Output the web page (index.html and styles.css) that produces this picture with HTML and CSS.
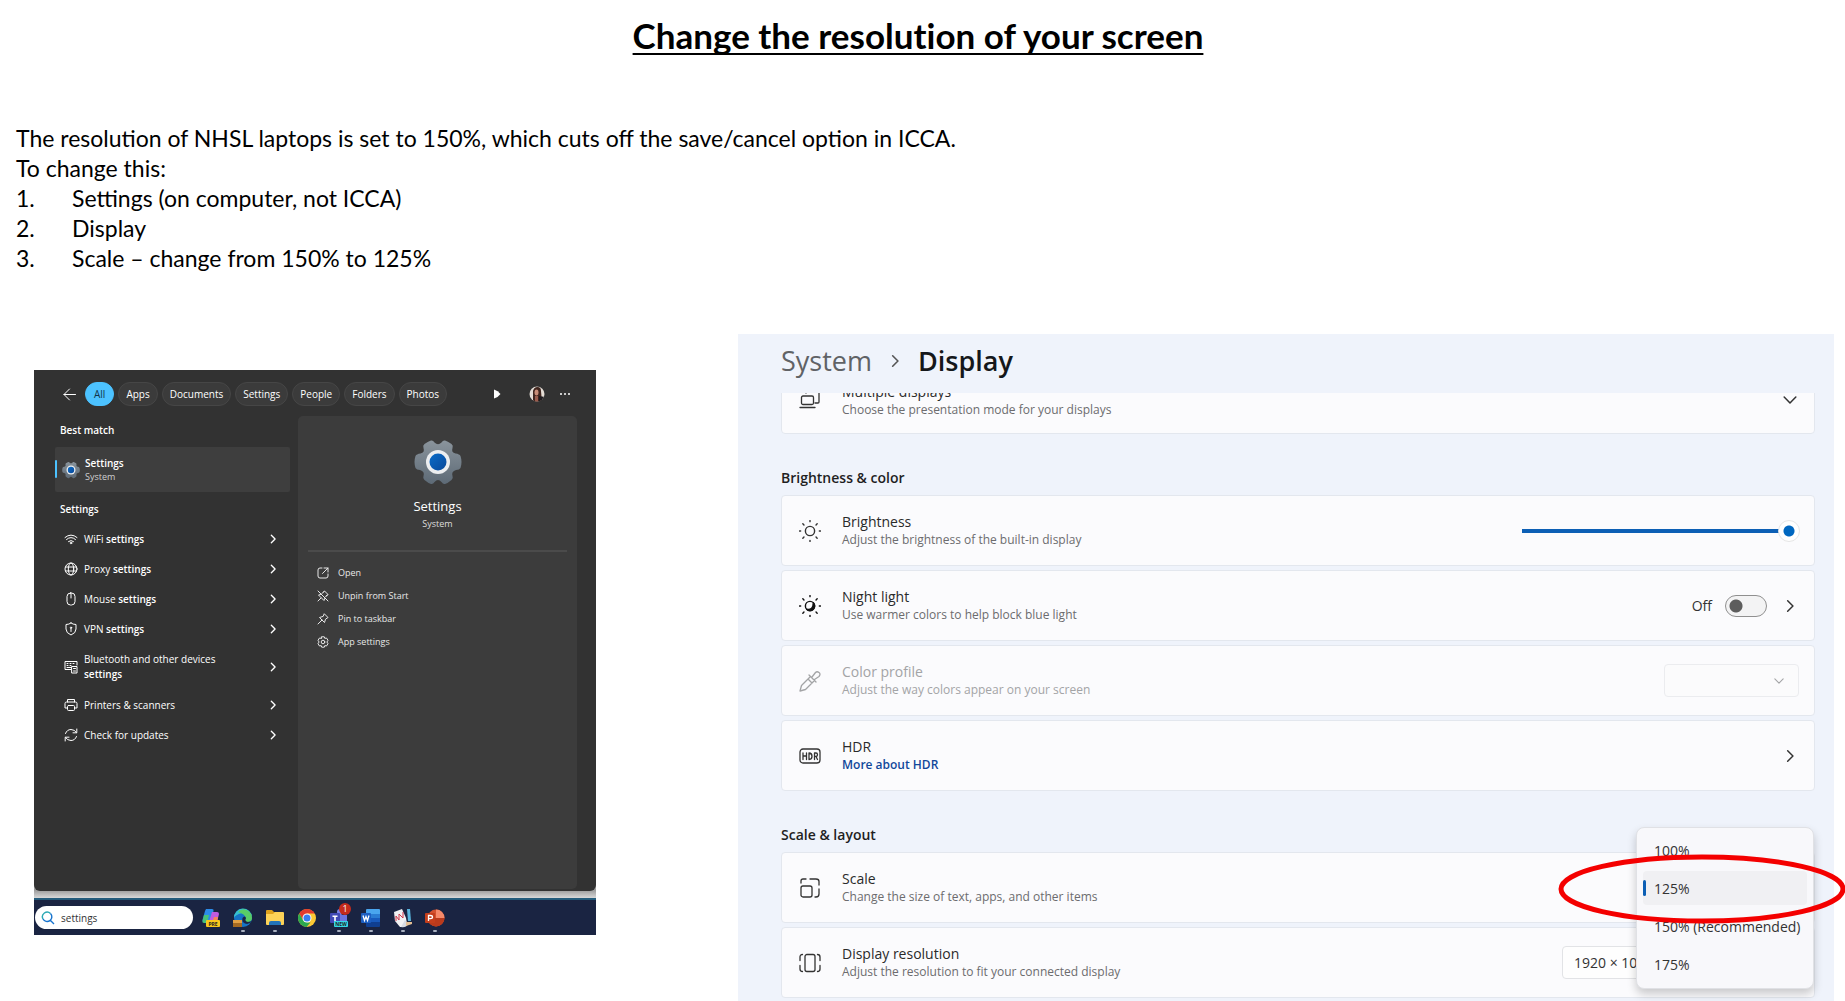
FILE: index.html
```html
<!DOCTYPE html>
<html lang="en">
<head>
<meta charset="utf-8">
<meta name="viewport" content="width=device-width, initial-scale=1">
<title>Change the resolution of your screen</title>
<link rel="stylesheet" href="styles.css">
</head>
<body>
<svg class="sprite" aria-hidden="true">
  <defs>
    <linearGradient id="gearGrad" x1="0" y1="0" x2="0" y2="1"><stop offset="0" stop-color="#8a949c"/><stop offset="1" stop-color="#5d6a76"/></linearGradient>
    <linearGradient id="hubGrad" x1="0" y1="0" x2="1" y2="1"><stop offset="0" stop-color="#0a6cc8"/><stop offset="1" stop-color="#08489a"/></linearGradient>
  </defs>
  <symbol id="gear" viewBox="0 0 48 48">
    <path fill="url(#gearGrad)" d="M17 2.5Q14.500 3 10.500 6Q8.500 7.500 9.500 10Q11 14.500 6.500 15.500Q2.500 16 1.500 18Q0.500 21 .5 24Q.5 27 1.500 30Q2.500 32 6 32Q11 33.500 9.500 38Q8.500 40.500 10.500 42Q14 45 17 46Q19 46.500 20.500 44Q24 40 27.500 44Q29 46.500 31 46Q34 45 37.500 42Q39.500 40.500 38.500 38Q37 33.500 42 32Q45.500 32 46.500 30Q47.500 27 47.500 24Q47.500 21 46.500 18Q45.500 16 41.500 15.500Q37 14.500 38.500 10Q39.500 7.500 37.500 6Q33.500 3 31 2.500Q29 2 27.500 4.500Q24 8 20.500 4.500Q19 2 17 2.500Z"/>
    <circle cx="24" cy="24" r="12" fill="#eceef0"/><circle cx="24" cy="24" r="8.500" fill="url(#hubGrad)"/>
  </symbol>
  <symbol id="chev" viewBox="0 0 12 12"><path d="M4 1.500 8.500 6 4 10.500"/></symbol>
  <symbol id="chevdown" viewBox="0 0 12 12"><path d="M1 3.500 6 8.500 11 3.500"/></symbol>
  <symbol id="rays" viewBox="0 0 20 20"><path d="M10 .5v1M10 18.500v1M.5 10h1M18.500 10h1M3.500 3.500l1 1M15.500 15.500l1 1M3.500 16.500l1-1M15.500 4.500l1-1"/></symbol>
</svg>

<header class="title"><h1>Change the resolution of your screen</h1></header>

<section class="intro">
  <p>The resolution of NHSL laptops is set to 150%, which cuts off the save/cancel option in ICCA.</p>
  <p>To change this:</p>
  <ol>
    <li>Settings (on computer, not ICCA)</li>
    <li>Display</li>
    <li>Scale – change from 150% to 125%</li>
  </ol>
</section>

<main class="shots">
  <section class="desktop" aria-label="Start search">
    <div class="search-panel">
      <div class="filters">
        <button class="plain" aria-label="Back"><svg class="line" width="13" height="13" viewBox="0 0 13 13"><path d="M12.500 6.500H1M6.500 1 1 6.500l5.500 5.500"/></svg></button>
        <button class="pill on">All</button>
        <button class="pill">Apps</button>
        <button class="pill">Documents</button>
        <button class="pill">Settings</button>
        <button class="pill">People</button>
        <button class="pill">Folders</button>
        <button class="pill">Photos</button>
        <span class="filter-end">
          <button class="plain" aria-label="Next filters"><svg width="8" height="10" viewBox="0 0 8 10"><path fill="#fff" d="M1 .5q4 1 6.500 4.500Q5 8.500 1 9.500z"/></svg></button>
          <button class="plain" aria-label="Account"><svg width="16" height="16" viewBox="0 0 16 16"><clipPath id="face"><circle cx="8" cy="8" r="7.500"/></clipPath><g clip-path="url(#face)"><rect width="16" height="16" fill="#e4ddd6"/><path fill="#40261f" d="M4 16V5q1-4 4.500-4T12 5l1 11z"/><ellipse cx="7.500" cy="6.500" rx="2" ry="3" fill="#c98e78"/><path fill="#9b5c4d" d="M6 10h3v6H6z"/><path fill="#1f1c20" d="M10 10l6 1v5h-6z"/></g></svg></button>
          <button class="plain" aria-label="More"><svg width="12" height="4" viewBox="0 0 12 4" fill="#fff"><circle cx="2" cy="2" r="1"/><circle cx="6" cy="2" r="1"/><circle cx="10" cy="2" r="1"/></svg></button>
        </span>
      </div>

      <div class="results">
        <div class="matches">
          <h2>Best match</h2>
          <button class="best">
            <svg width="18" height="18"><use href="#gear"/></svg>
            <span><b>Settings</b><small>System</small></span>
          </button>
          <h2 class="second">Settings</h2>
          <ul>
            <li><button class="row"><svg class="line" width="14" height="14" viewBox="0 0 14 14"><path d="M1 5.500q6-5 12 0M2.500 7.500q4.500-4 9 0M4.500 9.500q2.500-2 5 0"/><circle cx="7" cy="11" r=".8"/></svg><span>WiFi <b>settings</b></span><svg class="line go" width="10" height="10"><use href="#chev"/></svg></button></li>
            <li><button class="row"><svg class="line" width="14" height="14" viewBox="0 0 14 14"><circle cx="7" cy="7" r="6"/><ellipse cx="7" cy="7" rx="2.700" ry="6"/><path d="M1.500 5h11M1.500 9h11"/></svg><span>Proxy <b>settings</b></span><svg class="line go" width="10" height="10"><use href="#chev"/></svg></button></li>
            <li><button class="row"><svg class="line" width="14" height="14" viewBox="0 0 14 14"><rect x="3" y="1" width="8" height="12" rx="3.500"/><path d="M7 1v5"/></svg><span>Mouse <b>settings</b></span><svg class="line go" width="10" height="10"><use href="#chev"/></svg></button></li>
            <li><button class="row"><svg class="line" width="14" height="14" viewBox="0 0 14 14"><path d="M7 1q2 1.500 5 1.500V7q0 4-5 6-5-2-5-6V2.500Q5 2.500 7 1zM7 6.500v3"/><circle cx="7" cy="5.700" r=".7"/></svg><span>VPN <b>settings</b></span><svg class="line go" width="10" height="10"><use href="#chev"/></svg></button></li>
            <li><button class="row tall"><svg class="line" width="14" height="14" viewBox="0 0 14 14"><path d="M7 9.500H1v-8h12V5M3 3.500h1M6 3.500h1M9 3.500h1M3 5.500h1M6 5.500h1M3 7.500h4"/><rect x="8" y="6.500" width="5" height="6.500"/><path d="M9.500 8.500h2M9.500 11h2"/></svg><span>Bluetooth and other devices <b>settings</b></span><svg class="line go" width="10" height="10"><use href="#chev"/></svg></button></li>
            <li><button class="row"><svg class="line" width="14" height="14" viewBox="0 0 14 14"><path d="M3.500 4V1.500h7V4M3.500 10H1V5.500Q1 4 2.500 4h9Q13 4 13 5.500V10h-2.500"/><rect x="3.500" y="7.500" width="7" height="5" rx="1"/></svg><span>Printers &amp; scanners</span><svg class="line go" width="10" height="10"><use href="#chev"/></svg></button></li>
            <li><button class="row"><svg class="line" width="14" height="14" viewBox="0 0 14 14"><path d="M1.500 5.500Q3 1.500 7 1.500q3.500 0 5.500 3M12.800 1v3.800H9M12.500 8.500Q11 12.500 7 12.500q-3.500 0-5.500-3M1.200 13V9.200H5"/></svg><span>Check for updates</span><svg class="line go" width="10" height="10"><use href="#chev"/></svg></button></li>
          </ul>
        </div>

        <div class="preview">
          <svg class="big-gear" width="48" height="48"><use href="#gear"/></svg>
          <h3>Settings</h3>
          <p>System</p>
          <hr>
          <ul>
            <li><button class="act"><svg class="line" width="12" height="12" viewBox="0 0 12 12"><path d="M5 1H3Q1 1 1 3v6q0 2 2 2h6q2 0 2-2V7M7 1h4v4M11 1 5.500 6.500"/></svg>Open</button></li>
            <li><button class="act"><svg class="line" width="12" height="12" viewBox="0 0 12 12"><path d="M1 1l10 10M6 2.500 7.500 1 11 4.500 9 6M3.500 4.500l-2 .5L7 10.500l.7-2M1 11l3-3M5 3.500l2-2M8.500 7l2-2"/></svg>Unpin from Start</button></li>
            <li><button class="act"><svg class="line" width="12" height="12" viewBox="0 0 12 12"><path d="M7.500 1 11 4.500 8.500 6.200 7.500 9.500l-5-5 3.300-1zM5 7l-4 4"/></svg>Pin to taskbar</button></li>
            <li><button class="act"><svg class="line" width="12" height="12" viewBox="0 0 12 12"><path d="M4.700.8h2.600l.5 1.600 1.700-.4 1.500 2.300L9.900 6l1.100 1.700L9.500 10l-1.700-.4-.5 1.600H4.700l-.5-1.600-1.700.4L1 7.700 2.100 6 1 4.300 2.500 2l1.700.4z"/><circle cx="6" cy="6" r="1.800"/></svg>App settings</button></li>
          </ul>
        </div>
      </div>
    </div>

    <div class="taskbar">
      <label class="search"><svg width="14" height="14" viewBox="0 0 14 14" fill="none"><path stroke="#2ba9b4" stroke-width="1.400" d="M2 8A4.700 4.700 0 0 1 9.500 2.500"/><path stroke="#1774cf" stroke-width="1.400" d="M9.500 2.500A4.700 4.700 0 1 1 2 8M9.500 9.500 13 13"/></svg><input type="text" value="settings" aria-label="Search"></label>
      <button class="app" aria-label="Copilot"><svg width="20" height="20" viewBox="0 0 20 20"><path fill="#2b8be8" d="M5 1h6q2 0 1.500 2L9 14H3q-2 0-1.500-2L4 3z"/><path fill="#47c27a" d="M3 7h5l-2 8H3q-2 0-1.500-2z"/><path fill="#c05be0" d="M11 4h5q2 0 2 2l-2 8H8z"/><path fill="#f7855a" d="M13 9h4l-1 6h-5z"/><rect x="5" y="12" width="14" height="7" rx="1" fill="#fbc71c"/><text x="12" y="18" text-anchor="middle" class="tag">PRE</text></svg></button>
      <button class="app open" aria-label="Edge"><svg width="20" height="20" viewBox="0 0 20 20"><circle cx="10" cy="10" r="9" fill="#1673c4"/><path fill="#36bfd0" d="M1 10A9 9 0 0 1 19 9Q17 3 9 5 2 7 1 10z"/><path fill="#59cd66" d="M11 1.200A9 9 0 0 1 19 10q0 4-5 4-3-1-1-4-1-4-8-6 3-3 6-2.800z"/><path fill="#1b2543" d="M9.500 10q2-3 3.500 0-2 3 2 4l3.500-.8Q16 17 12 15.500 8.500 14 9.500 10z"/><path fill="#a56a22" d="M0 12h9v7H0z"/><path fill="#e1a044" d="M0 12h9v3H0z"/></svg></button>
      <button class="app open" aria-label="File Explorer"><svg width="20" height="20" viewBox="0 0 20 20"><path fill="#dfa21d" d="M1 3q0-1 1-1h5l2 2h9v4H1z"/><path fill="#fdd257" d="M1 6h7l2-2h8q1 0 1 1v11q0 1-1 1H2q-1 0-1-1z"/><path fill="#2273b8" d="M4 17v-2q0-2 2-2h8q2 0 2 2v2z"/></svg></button>
      <button class="app" aria-label="Chrome"><svg width="20" height="20" viewBox="0 0 20 20"><circle cx="10" cy="10" r="9" fill="#fcc934"/><path fill="#e33b2e" d="M2.200 5.500A9 9 0 0 1 17.800 5.500H10L6 12.300z"/><path fill="#2da94f" d="M2.200 5.500 6.100 12.300Q8 15 10.500 14.500L9.500 19A9 9 0 0 1 2.200 5.500z"/><path fill="#2da94f" d="M6.100 12.300 10 14.500h3.500L9.500 19z"/><circle cx="10" cy="10" r="4.500" fill="#fff"/><circle cx="10" cy="10" r="3.500" fill="#3a7df0"/></svg></button>
      <button class="app open" aria-label="Teams, 1 notification"><svg width="20" height="20" viewBox="0 0 20 20"><circle cx="11" cy="4" r="3" fill="#7b83eb"/><path fill="#6b74df" d="M8 7h10v6q-1 4-5 4t-5-4z"/><rect x="1" y="5" width="10" height="10" rx="1" fill="#4149b5"/><path fill="#fff" d="M3.500 7.500h5V9H6.800v4.500H5.200V9H3.500z"/><rect x="5" y="13" width="14" height="6" rx="1" fill="#35d8e8"/><text x="12" y="18" text-anchor="middle" class="tag">NEW</text></svg><span class="badge">1</span></button>
      <button class="app open" aria-label="Word"><svg width="20" height="20" viewBox="0 0 20 20"><path fill="#4aa5ee" d="M6 1h12q1 0 1 1v4H5V2q0-1 1-1z"/><path fill="#2b7cd3" d="M5 6h14v4H5z"/><path fill="#185abd" d="M5 10h14v4H5z"/><path fill="#103f91" d="M5 14h14v4q0 1-1 1H6q-1 0-1-1z"/><rect x="0" y="5" width="10" height="10" rx="1" fill="#1d5fc2"/><path d="M2 7.500 3.500 12.500 5 8.500 6.500 12.500 8 7.500" fill="none" stroke="#fff" stroke-width="1.300"/></svg></button>
      <button class="app open" aria-label="Notes"><svg width="20" height="20" viewBox="0 0 20 20"><path fill="#f1f1f3" d="M1 4 9 1l4 9 1 6-4 3H7l-5-6z"/><path fill="#d7dbe3" d="M8 19q5 1 7-3l-3-4z"/><path fill="none" stroke="#d0384b" stroke-width="1" d="M3 13V8l3 4V6l4 4V4"/><path fill="#59b4dc" d="M14 1h3l1 12h-3z"/><path fill="#e4bf94" d="M13 14h6v2l-6 2z"/></svg></button>
      <button class="app open" aria-label="PowerPoint"><svg width="20" height="20" viewBox="0 0 20 20"><circle cx="11" cy="10" r="8.500" fill="#d35230"/><path fill="#f58a6a" d="M11 1.500a8.500 8.500 0 0 1 8.500 8.500H11z"/><path fill="#b93a1c" d="M2.500 10h17a8.500 8.500 0 0 1-17 0z"/><rect x="0" y="5" width="10" height="10" rx="1" fill="#c43e1c"/><path d="M3.500 13V7.500h2q2 0 2 1.600t-2 1.600h-2" fill="none" stroke="#fff" stroke-width="1.300"/></svg></button>
    </div>
  </section>

  <section class="settings" aria-label="Display settings">
    <nav class="crumbs"><a href="#system">System</a><svg class="line" width="14" height="14"><use href="#chev"/></svg><strong>Display</strong></nav>

    <div class="scrolled">
      <div class="card">
        <svg class="line icon" width="22" height="22" viewBox="0 0 22 22"><path d="M7 4V2h13v11q0 1-1 1h-3M1 18.500h15"/><rect x="2.500" y="7" width="12" height="8.500" rx="1.500"/></svg>
        <div class="text"><h3>Multiple displays</h3><p>Choose the presentation mode for your displays</p></div>
        <svg class="line" width="14" height="14"><use href="#chevdown"/></svg>
      </div>
    </div>

    <h2>Brightness &amp; color</h2>
    <div class="cards">
      <div class="card">
        <svg class="line icon" width="22" height="22" viewBox="0 0 20 20"><use href="#rays"/><circle cx="10" cy="10" r="4.200"/></svg>
        <div class="text"><h3><label for="bright">Brightness</label></h3><p>Adjust the brightness of the built-in display</p></div>
        <input id="bright" class="slider" type="range" min="0" max="100" value="100">
      </div>
      <div class="card">
        <svg class="line icon dark" width="22" height="22" viewBox="0 0 20 20"><use href="#rays"/><circle cx="10" cy="10" r="4.200"/><path class="fill" d="M13 7a4.200 4.200 0 1 1-6 6q3 .5 4.500-1T13 7z"/></svg>
        <div class="text"><h3>Night light</h3><p>Use warmer colors to help block blue light</p></div>
        <label class="switch"><span>Off</span><input type="checkbox" role="switch" aria-label="Night light"></label>
        <svg class="line" width="14" height="14"><use href="#chev"/></svg>
      </div>
      <div class="card off">
        <svg class="line icon" width="22" height="22" viewBox="0 0 22 22"><path d="M11.500 6.500 2.500 15.500 1 21l5.500-1.500 9-9M10 5l7 7M13 7l3.500-4.500q1.500-1.500 3.500 0t0 4L15.500 9.500M9 9l4 4"/></svg>
        <div class="text"><h3><label for="profile">Color profile</label></h3><p>Adjust the way colors appear on your screen</p></div>
        <span class="drop small"><select id="profile" disabled><option></option></select><svg class="line" width="10" height="10"><use href="#chevdown"/></svg></span>
      </div>
      <div class="card">
        <svg class="line icon" width="22" height="22" viewBox="0 0 22 22"><rect x="1" y="4" width="20" height="14" rx="3"/><path d="M4 8v6.500M7.500 8v6.500M4 11h3.500M10 8v6.500q3 0 3-3.200T10 8zM15.500 14.500V8h1.500q1.500 0 1.500 1.700t-1.500 1.700h-1.500M17 11.500l1.500 3"/></svg>
        <div class="text"><h3>HDR</h3><p><a href="#hdr">More about HDR</a></p></div>
        <svg class="line" width="14" height="14"><use href="#chev"/></svg>
      </div>
    </div>

    <h2>Scale &amp; layout</h2>
    <div class="cards last">
      <div class="card">
        <svg class="line icon" width="22" height="22" viewBox="0 0 22 22"><rect x="2" y="9" width="11" height="11" rx="2"/><path d="M2 6V4q0-2 2-2h3M11 2h6q3 0 3 2.500V8M20 12v5q0 3-3 3h-1"/></svg>
        <div class="text"><h3>Scale</h3><p>Change the size of text, apps, and other items</p></div>
        <div class="menu" role="listbox" aria-label="Scale">
          <button role="option">100%</button>
          <button role="option" aria-selected="true" class="picked">125%</button>
          <button role="option">150% (Recommended)</button>
          <button role="option">175%</button>
        </div>
        <svg class="ring" width="288" height="70" viewBox="0 0 288 70" aria-hidden="true"><ellipse cx="144" cy="35" rx="141" ry="32"/></svg>
      </div>
      <div class="card">
        <svg class="line icon" width="22" height="22" viewBox="0 0 22 22"><rect x="6" y="2.500" width="10" height="17" rx="2"/><path d="M3.500 2.500Q1 2.500 1 5v3.500M1 13.500V17q0 2.500 2.500 2.500M18.500 2.500Q21 2.500 21 5v3.500M21 13.500V17q0 2.500-2.500 2.500"/></svg>
        <div class="text"><h3><label for="res">Display resolution</label></h3><p>Adjust the resolution to fit your connected display</p></div>
        <span class="drop"><select id="res"><option>1920 × 1080</option></select></span>
      </div>
    </div>
  </section>
</main>
</body>
</html>
```
FILE: styles.css
```css
* { box-sizing: border-box; }
body { margin: 0; background: #fff; color: #000; font-family: "Open Sans", "Noto Sans", sans-serif; }
h1, h2, h3, p, ul, ol { margin: 0; padding: 0; }
ul { list-style: none; }
button, input, select { font: inherit; color: inherit; margin: 0; }
button { border: 0; background: none; padding: 0; }
svg { flex: none; display: block; }
.sprite { position: absolute; width: 0; height: 0; }
.line { fill: none; stroke: currentColor; stroke-linecap: round; stroke-linejoin: round; }

.title { padding: 10px 9px 0 0; text-align: center; font-family: Lato, sans-serif; font-variant-ligatures: none; }
.title h1 { font-size: 35px; line-height: 50px; text-decoration: underline; text-decoration-thickness: 2px; text-underline-offset: 4px; text-decoration-skip-ink: none; }

.intro { padding: 63px 16px 0; font-family: Lato, sans-serif; font-size: 23px; line-height: 30px; }
.intro ol { padding-left: 56px; counter-reset: step; list-style: none; }
.intro li { counter-increment: step; }
.intro li::before { content: counter(step) "."; display: inline-block; width: 56px; margin-left: -56px; }

.shots { display: grid; grid-template-columns: 562fr 1096fr; gap: 142px; align-items: start; padding: 61px 11px 0 34px; }

/* Start search panel */
.desktop { margin-top: 36px; color: #fff; background: linear-gradient(#fff 0 500px, #9b9b9b 520px, #d8d8d8 528px); }
.search-panel { height: 521px; display: flex; flex-direction: column; padding: 12px 19px 2px 21px; background: #323232; border-radius: 0 0 6px 6px; font-size: 10px; }
.filters { display: flex; align-items: center; gap: 4px; height: 24px; padding-left: 8px; }
.plain { display: flex; }
.filters > .plain { margin-right: 5px; }
.pill { height: 24px; padding: 0 7px; border: 1px solid #464646; border-radius: 12px; background: #3b3b3b; line-height: 20px; white-space: nowrap; }
.pill.on { padding: 0 8px; background: #4cc2ff; border-color: #4cc2ff; color: #12344a; }
.filter-end { display: flex; align-items: center; margin-left: auto; gap: 14px; padding-right: 6px; }
.filter-end .plain:first-child { margin-right: 14px; }
.results { flex: 1; display: grid; grid-template-columns: 235px 1fr; gap: 8px; padding-top: 10px; }
.matches h2 { padding-left: 5px; font-size: 10px; line-height: 29px; font-weight: 600; }
.matches h2.second { padding-top: 3px; }
.best { position: relative; display: flex; align-items: center; gap: 5px; width: 100%; height: 45px; margin-top: 2px; padding-left: 7px; border-radius: 2px; background: #3e3e3e; text-align: left; }
.best::before { content: ""; position: absolute; left: 0; top: 13px; width: 2px; height: 18px; background: #4cc2ff; border-radius: 1px; }
.best b, .best small { display: block; line-height: 14px; font-weight: 600; }
.best small { font-size: 9px; font-weight: 400; color: #d0d0d0; }
.row b { font-weight: 600; }
.row { display: flex; align-items: center; gap: 6px; width: 100%; height: 30px; padding: 0 12px 0 9px; text-align: left; line-height: 15px; }
.row span { flex: 0 1 150px; margin-right: auto; }
.row .go { stroke-width: 1.6; }
.row.tall { height: 46px; }
.preview { display: flex; flex-direction: column; align-items: center; padding: 22px 10px 0; border-radius: 5px; background: #3c3c3c; }
.preview h3 { margin-top: 9px; font-size: 13px; line-height: 22px; font-weight: 400; }
.preview p { font-size: 9px; line-height: 14px; color: #ddd; }
.preview hr { width: 100%; height: 2px; margin: 19px 0 9px; border: 0; background: #4b4b4b; }
.preview ul { width: 100%; }
.act { display: flex; align-items: center; gap: 9px; height: 23px; padding-left: 9px; font-size: 9px; color: #e8e8e8; }

.taskbar { display: flex; align-items: center; height: 37px; margin-top: 7px; padding-left: 1px; border-top: 2px solid #245c7c; background: #1a2442; }
.search { display: flex; align-items: center; gap: 6px; width: 158px; height: 23px; margin-right: 2px; padding-left: 6px; border-radius: 12px; background: #fff; color: #333; font-size: 10px; }
.search input { width: 100px; border: 0; padding: 0; background: none; outline: 0; }
.app { position: relative; display: flex; justify-content: center; align-items: center; width: 32px; height: 34px; }
.app.open::after { content: ""; position: absolute; left: 14px; bottom: 3px; width: 4px; height: 2px; border-radius: 1px; background: #a9b1c2; }
.tag { font: 700 5px "Open Sans", sans-serif; fill: #222; }
.badge { position: absolute; left: 16px; top: 2px; width: 12px; height: 12px; border-radius: 6px; background: #c42b1c; color: #fff; font-size: 9px; line-height: 12px; text-align: center; }

/* Display settings window */
.settings { padding: 0 19px 3px 43px; background: #eff3fb; color: #1f1f1f; }
.crumbs { display: flex; align-items: center; height: 59px; padding-bottom: 6px; gap: 16px; font-size: 27px; font-weight: 600; }
.crumbs a { color: #606266; text-decoration: none; font-weight: 500; }
.crumbs .line { color: #555; stroke-width: 1.4; }
.crumbs strong { font-weight: 600; color: #15171a; }
.scrolled { display: flex; align-items: flex-end; height: 41px; overflow: hidden; }
.scrolled .card { flex: 1; padding-top: 3px; }
.settings h2 { padding: 32px 0 5px; font-size: 14px; line-height: 24px; font-weight: 600; }
.cards { display: grid; gap: 4px; }
.card { position: relative; display: flex; align-items: center; gap: 16px; height: 71px; padding: 0 17px; border: 1px solid #e3e7ee; border-radius: 4px; background: #fbfbfd; color: #333; }
.card .line { stroke-width: 1.3; }
.icon { margin: 0 5px 0 0; }
.dark { color: #111; }
.fill { fill: #111; }
.text { flex: 1; }
.text h3 { font-size: 14px; line-height: 19px; font-weight: 400; color: #2a2a2a; }
.text p { font-size: 12px; line-height: 18px; color: #6c6c6e; }
.text a { color: #11489b; font-weight: 600; text-decoration: none; }
.off, .off .text h3, .off .text p { color: #a3a4a6; }
.slider { appearance: none; width: 278px; height: 22px; background: linear-gradient(#0c5fb5, #0c5fb5) no-repeat 0 9px / 266px 4px; }
.slider::-webkit-slider-thumb { appearance: none; width: 22px; height: 22px; border-radius: 50%; border: 1px solid #e6e6e6; background: radial-gradient(#0067c0 0 5px, #fff 6px); }
.card > .slider { margin-right: -3px; }
.switch { display: flex; align-items: center; gap: 13px; font-size: 14px; }
.switch input { appearance: none; width: 42px; height: 22px; border: 1px solid #8f8f8f; border-radius: 11px; background: radial-gradient(circle at 10px 10px, #5d5d5d 0 6px, #f3f3f4 7px); }
.drop { position: relative; display: block; width: 237px; height: 33px; margin-right: -2px; }
.drop.small { width: 135px; }
.drop select { appearance: none; width: 100%; height: 100%; padding: 0 11px; border: 1px solid #e2e3e6; border-radius: 4px; background: #fefefe; font-size: 14px; opacity: 1; }
.drop.small select { border-color: #ebecef; background: #fbfbfc; }
.drop svg { position: absolute; right: 15px; top: 12px; }
.menu { position: absolute; z-index: 2; right: 0; top: -26px; width: 178px; padding: 3px 6px; border: 1px solid #e0e1e5; border-radius: 8px; background: #f8f8fb; box-shadow: 0 5px 10px rgba(0, 0, 0, .2); }
.menu button { position: relative; display: block; width: 100%; height: 34px; margin: 2px 0 4px; padding-left: 11px; border-radius: 4px; font-size: 14px; text-align: left; white-space: nowrap; }
.menu .picked { background: #f0f0f3; }
.menu .picked::before { content: ""; position: absolute; left: 0; top: 9px; width: 3px; height: 16px; border-radius: 2px; background: #0c5fb5; }
.card .ring { position: absolute; z-index: 3; right: -32px; top: 1px; fill: none; stroke: #f40000; stroke-width: 5; }
```
